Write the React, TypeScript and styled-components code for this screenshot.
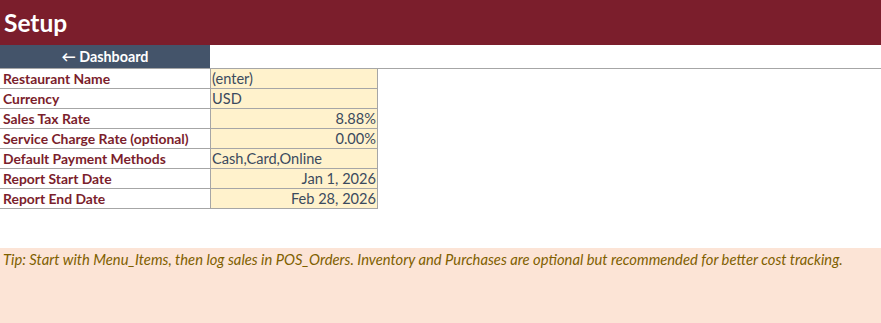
import { Fragment } from 'react';
import styled, { createGlobalStyle } from 'styled-components';

const GlobalStyle = createGlobalStyle`
  html, body {
    margin: 0;
    padding: 0;
    background: #ffffff;
  }
  body {
    font-family: Lato, 'Open Sans', sans-serif;
  }
`;

const Page = styled.div`
  width: 881px;
  height: 323px;
  display: flex;
  flex-direction: column;
  overflow: hidden;
`;

const TitleBar = styled.div`
  height: 45px;
  background: #7b1e2c;
  display: flex;
  align-items: center;
  padding-left: 4px;
  color: #ffffff;
  font-size: 24.5px;
  font-weight: 700;
`;

const NavRow = styled.div`
  display: flex;
  height: 23px;
  border-bottom: 1px solid #a6a6a6;
`;

const NavButton = styled.button`
  width: 210px;
  border: none;
  background: #44546a;
  color: #ffffff;
  font-family: inherit;
  font-size: 14.3px;
  font-weight: 700;
  cursor: pointer;
  padding: 0;
`;

const Table = styled.div`
  display: grid;
  grid-template-columns: 210px 168px;
`;

const Label = styled.div`
  height: 19px;
  border-bottom: 1px solid #a6a6a6;
  color: #7b1e2c;
  font-size: 13.9px;
  font-weight: 700;
  padding-left: 3px;
  display: flex;
  align-items: center;
`;

const Value = styled.div<{ $align?: 'left' | 'right' }>`
  height: 19px;
  border-bottom: 1px solid #a6a6a6;
  border-left: 1px solid #a6a6a6;
  border-right: 1px solid #a6a6a6;
  background: #fff2cc;
  color: #3b4a5e;
  font-size: 14.6px;
  display: flex;
  align-items: center;
  justify-content: ${(p) => (p.$align === 'right' ? 'flex-end' : 'flex-start')};
  padding: 0 1px;
`;

const Spacer = styled.div`
  height: 39px;
`;

const Tip = styled.div`
  flex: 1;
  background: #fce4d6;
  color: #7f6000;
  font-style: italic;
  font-size: 14.75px;
  padding: 2px 3px;
`;

const rows: { label: string; value: string; align?: 'left' | 'right' }[] = [
  { label: 'Restaurant Name', value: '(enter)' },
  { label: 'Currency', value: 'USD' },
  { label: 'Sales Tax Rate', value: '8.88%', align: 'right' },
  { label: 'Service Charge Rate (optional)', value: '0.00%', align: 'right' },
  { label: 'Default Payment Methods', value: 'Cash,Card,Online' },
  { label: 'Report Start Date', value: 'Jan 1, 2026', align: 'right' },
  { label: 'Report End Date', value: 'Feb 28, 2026', align: 'right' },
];

export default function App() {
  return (
    <>
      <GlobalStyle />
      <Page>
        <TitleBar>Setup</TitleBar>
        <NavRow>
          <NavButton>← Dashboard</NavButton>
        </NavRow>
        <Table>
          {rows.map((r) => (
            <Fragment key={r.label}>
              <Label>{r.label}</Label>
              <Value $align={r.align}>{r.value}</Value>
            </Fragment>
          ))}
        </Table>
        <Spacer />
        <Tip>
          Tip: Start with Menu_Items, then log sales in POS_Orders. Inventory and
          Purchases are optional but recommended for better cost tracking.
        </Tip>
      </Page>
    </>
  );
}
